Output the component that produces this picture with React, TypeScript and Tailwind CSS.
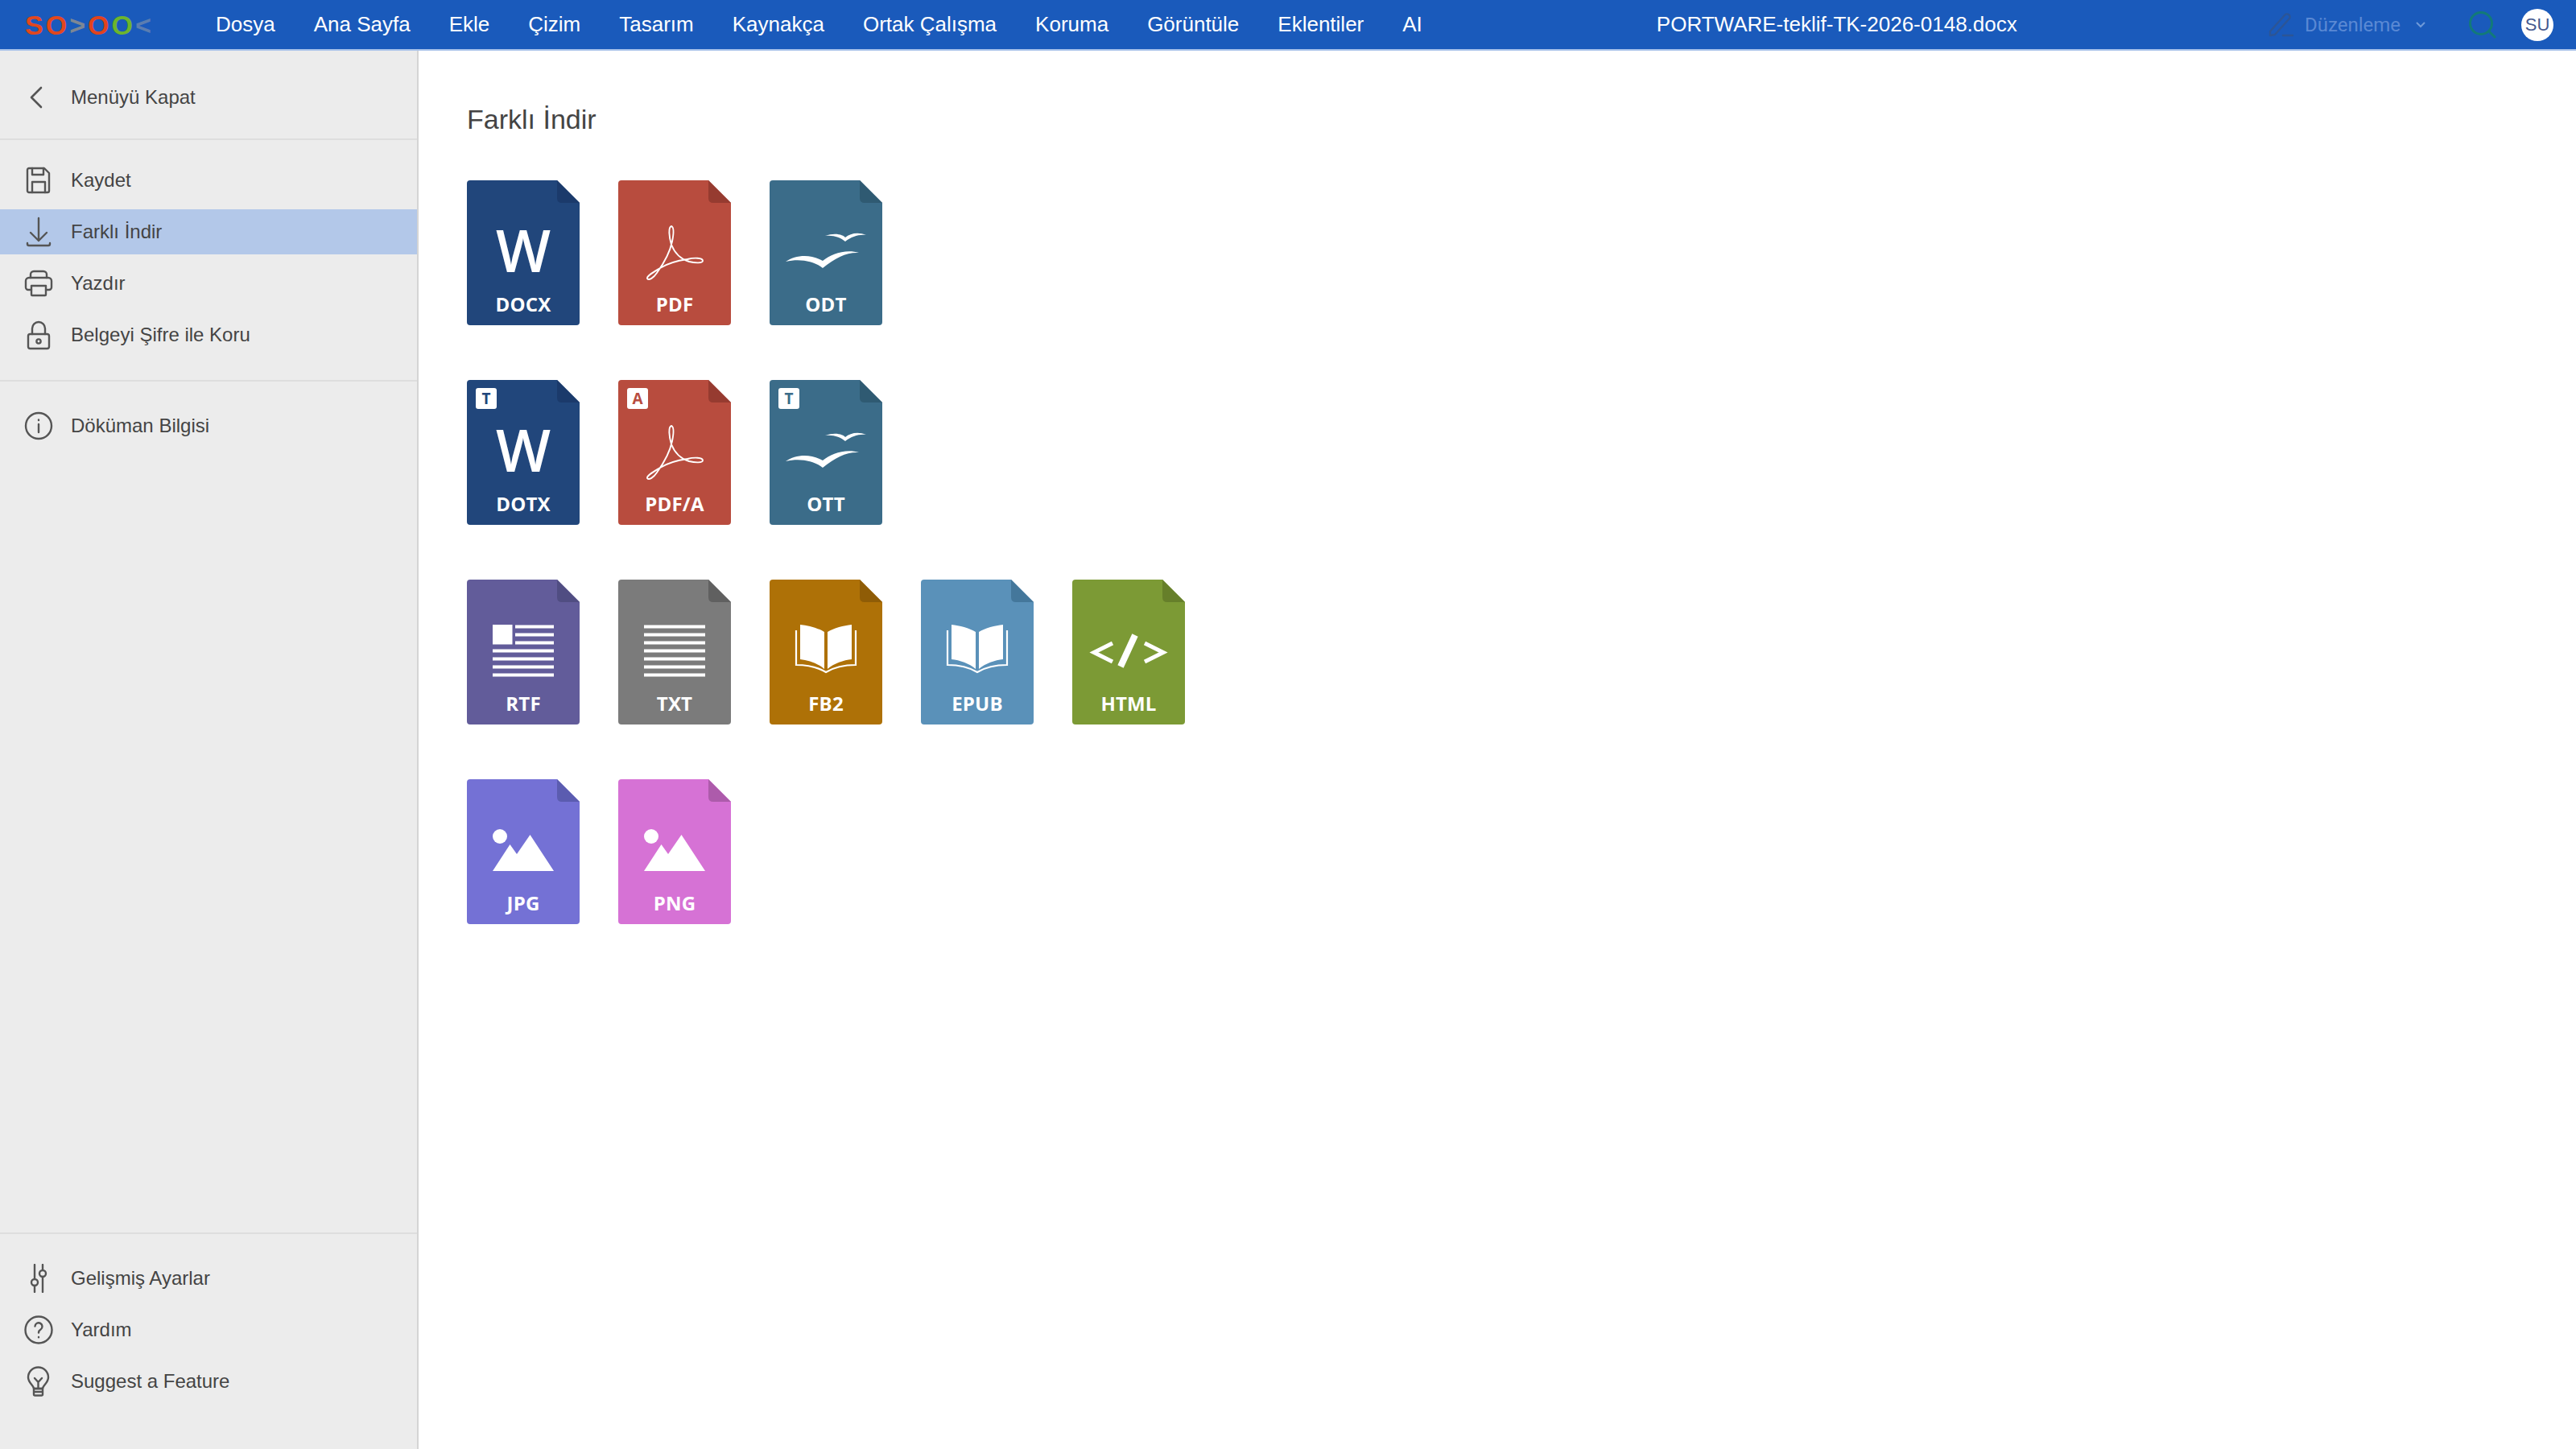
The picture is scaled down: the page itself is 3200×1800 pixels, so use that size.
import React from "react";

const stroke = { fill: "none", stroke: "#555555", strokeWidth: 2.4, strokeLinecap: "round" as const, strokeLinejoin: "round" as const };

const SaveI = () => (
  <svg width="36" height="36" viewBox="0 0 36 36" {...stroke}>
    <path d="M6 3h19l6 6v22a2 2 0 0 1-2 2H6a2 2 0 0 1-2-2V5a2 2 0 0 1 2-2z" />
    <path d="M10 3v8h14V3M10 33V20h16v13" />
  </svg>
);
const DownloadI = () => (
  <svg width="36" height="38" viewBox="0 0 36 38" {...stroke}>
    <path d="M18 2v28M8 20l10 10 10-10" />
    <path d="M4 33v1a2 2 0 0 0 2 2h24a2 2 0 0 0 2-2v-1" />
  </svg>
);
const PrintI = () => (
  <svg width="36" height="36" viewBox="0 0 36 36" {...stroke}>
    <path d="M8 11V7a4 4 0 0 1 4-4h12a4 4 0 0 1 4 4v4" />
    <path d="M9 26H5a3 3 0 0 1-3-3v-8a4 4 0 0 1 4-4h24a4 4 0 0 1 4 4v8a3 3 0 0 1-3 3h-4" />
    <path d="M9 21h18v11a1 1 0 0 1-1 1H10a1 1 0 0 1-1-1z" />
  </svg>
);
const LockI = () => (
  <svg width="36" height="38" viewBox="0 0 36 38" {...stroke}>
    <rect x="5" y="18" width="26" height="18" rx="2.5" />
    <path d="M10 18v-7a8 8 0 0 1 16 0v7" />
    <circle cx="18" cy="27" r="2.6" />
  </svg>
);
const InfoI = () => (
  <svg width="36" height="36" viewBox="0 0 36 36" {...stroke}>
    <circle cx="18" cy="18" r="16" />
    <path d="M18 16v10M18 10.5v.5" />
  </svg>
);
const SlidersI = () => (
  <svg width="36" height="36" viewBox="0 0 36 36" {...stroke}>
    <path d="M13 1v17M13 27v8M23 1v6M23 16v19" />
    <circle cx="13" cy="23" r="4" />
    <circle cx="23" cy="12" r="4" />
  </svg>
);
const HelpI = () => (
  <svg width="36" height="36" viewBox="0 0 36 36" {...stroke}>
    <circle cx="18" cy="18" r="16.5" />
    <path d="M13.5 13.5a4.5 4.5 0 1 1 7 4c-1.600 1-2.500 2-2.500 4M18 27v.2" />
  </svg>
);
const BulbI = () => (
  <svg width="36" height="38" viewBox="0 0 36 38" {...stroke}>
    <path d="M12 28c0-4-7-7-7-14a12.500 12.500 0 0 1 25 0c0 7-7 10-7 14z" />
    <path d="M13 15l4.500 5 4.500-5M17.500 20v8M12 28h11v7a1.500 1.500 0 0 1-1.500 1.500h-8A1.500 1.500 0 0 1 12 35zM12 32h11" />
  </svg>
);

function Item({ icon, label, active }: { icon: React.ReactNode; label: string; active?: boolean }) {
  return (
    <div className={`flex h-[56px] items-center ${active ? "bg-[#b3c8e9]" : ""}`}>
      <div className="flex w-[88px] shrink-0 items-center justify-start pl-[30px]">{icon}</div>
      <span className="text-[24px] leading-none text-[#444444]">{label}</span>
    </div>
  );
}

const Word = () => (
  <text x="70" y="114" textAnchor="middle" fill="#fff" fontSize="72" fontWeight="600" className="font-['Open_Sans',sans-serif]">W</text>
);
const Pdf = () => (
  <path
    d="M66 57C62 58 63 70 66 80C70 90 78 98 88 101C96 103 105 103 105 100C105 96 94 96 86 98C72 100 60 104 52 109C44 114 35 119 36 122C38 125 44 121 48 115C56 104 64 90 67 76C69 66 69 58 66 57Z"
    fill="none"
    stroke="#fff"
    strokeWidth="1.900"
  />
);
const Gulls = () => (
  <g fill="#fff">
    <path d="M20 101C32 93 50 91 66 100C76 92 94 85 111 90C96 89 82 96 66 109C58 102 40 96 20 101Z" />
    <path d="M69 69C82 64 92 68 94 71C100 66 110 64 120 68C110 67 102 70 94 76C88 71 80 68 69 69Z" />
  </g>
);
const Rtf = () => (
  <g fill="#fff">
    <rect x="32" y="56" width="24.500" height="24.500" />
    {[56.500, 66.500, 76.500].map((y) => (
      <rect key={y} x="60" y={y} width="48" height="4" />
    ))}
    {[86.500, 96.500, 106.500, 116.500].map((y) => (
      <rect key={y} x="32" y={y} width="76" height="4" />
    ))}
  </g>
);
const Txt = () => (
  <g fill="#fff">
    {[56.500, 66.500, 76.500, 86.500, 96.500, 106.500, 116.500].map((y) => (
      <rect key={y} x="32" y={y} width="76" height="4" />
    ))}
  </g>
);
const Book = () => (
  <g>
    <path fill="#fff" d="M38 56C48 57 60 60 68 65V111C60 104 48 100 38 99Z" />
    <path fill="#fff" d="M72 65C80 60 92 57 102 56V99C92 100 80 104 72 111Z" />
    <path fill="none" stroke="#fff" strokeWidth="2.200" d="M33 63V106C48 106 60 109 70 115C80 109 92 106 107 106V63" />
  </g>
);
const Code = () => (
  <g fill="none" stroke="#fff">
    <path strokeWidth="5" d="M50 79L27 90.500L50 102" />
    <path strokeWidth="5" d="M90 79L113 90.500L90 102" />
    <path strokeWidth="8" d="M78 69L60 108" />
  </g>
);
const Pic = () => (
  <g fill="#fff">
    <circle cx="41" cy="71" r="9" />
    <path d="M32 114L53.500 81L62 93L78.500 69L108 114Z" />
  </g>
);

type Card = { label: string; bg: string; fold: string; art: React.ReactNode; badge?: string };

const rows: Card[][] = [
  [
    { label: "DOCX", bg: "#21467b", fold: "#1b3a6b", art: <Word /> },
    { label: "PDF", bg: "#b84c3e", fold: "#963b30", art: <Pdf /> },
    { label: "ODT", bg: "#3b6c89", fold: "#2f5a72", art: <Gulls /> },
  ],
  [
    { label: "DOTX", bg: "#21467b", fold: "#1b3a6b", art: <Word />, badge: "T" },
    { label: "PDF/A", bg: "#b84c3e", fold: "#963b30", art: <Pdf />, badge: "A" },
    { label: "OTT", bg: "#3b6c89", fold: "#2f5a72", art: <Gulls />, badge: "T" },
  ],
  [
    { label: "RTF", bg: "#625c9a", fold: "#504d82", art: <Rtf /> },
    { label: "TXT", bg: "#7b7b7b", fold: "#606060", art: <Txt /> },
    { label: "FB2", bg: "#ae7107", fold: "#8f5c06", art: <Book /> },
    { label: "EPUB", bg: "#5a91b9", fold: "#44779b", art: <Book /> },
    { label: "HTML", bg: "#7c9a35", fold: "#667f2a", art: <Code /> },
  ],
  [
    { label: "JPG", bg: "#7471d5", fold: "#5b5cb0", art: <Pic /> },
    { label: "PNG", bg: "#d672d5", fold: "#ad5bab", art: <Pic /> },
  ],
];

function FileCard({ c }: { c: Card }) {
  return (
    <div className="relative h-[180px] w-[140px]">
      <svg width="140" height="180" viewBox="0 0 140 180" className="block">
        <path d="M4 0H112L140 28V176a4 4 0 0 1-4 4H4a4 4 0 0 1-4-4V4a4 4 0 0 1 4-4Z" fill={c.bg} />
        <path d="M112 0L140 28H118Q112 28 112 22Z" fill={c.fold} />
        {c.art}
      </svg>
      {c.badge && (
        <span
          className="absolute left-[11px] top-[10px] flex h-[26px] w-[26px] items-center justify-center rounded-[3px] bg-white font-['Open_Sans',sans-serif] text-[19px] font-bold leading-none"
          style={{ color: c.bg }}
        >
          {c.badge}
        </span>
      )}
      <span className="absolute inset-x-0 bottom-[10px] text-center font-['Open_Sans',sans-serif] text-[24px] font-bold leading-[32px] tracking-[0.2px] text-white">
        {c.label}
      </span>
    </div>
  );
}

const menu = ["Dosya", "Ana Sayfa", "Ekle", "Çizim", "Tasarım", "Kaynakça", "Ortak Çalışma", "Koruma", "Görüntüle", "Eklentiler", "AI"];

export default function App() {
  return (
    <div className="flex h-[1800px] w-[3200px] flex-col overflow-hidden bg-white font-['Liberation_Sans',Arial,sans-serif]">
      <header className="flex h-[63px] shrink-0 items-center border-b-2 border-[#a9c3ea] bg-[#1a5abb] text-[26px] text-white">
        <div className="flex w-[268px] shrink-0 items-center pl-[31px] text-[34px] font-bold leading-none tracking-[3px]">
          <span className="text-[#e2471d]">SO</span>
          <span className="text-[#7d8794]">&gt;</span>
          <span className="text-[#e2431c]">O</span>
          <span className="text-[#6cb52d]">O</span>
          <span className="text-[#5b7db0]">&lt;</span>
        </div>
        <nav className="flex gap-[48px] whitespace-nowrap">
          {menu.map((m) => (
            <span key={m}>{m}</span>
          ))}
        </nav>
        <div className="ml-[291px] whitespace-nowrap">PORTWARE-teklif-TK-2026-0148.docx</div>
        <div className="ml-auto flex items-center pr-[28px]">
          <svg width="32" height="32" viewBox="0 0 32 32" fill="none" stroke="#2c5596" strokeWidth="2.400" strokeLinecap="round" strokeLinejoin="round">
            <path d="M2 24L20 4a3.500 3.500 0 0 1 6 4L8 28l-6 1z" />
            <path d="M18 29h12" />
          </svg>
          <span className="ml-[13px] font-['Roboto',sans-serif] text-[24px] text-[#5a89d4]">Düzenleme</span>
          <svg className="ml-[18px]" width="14" height="10" viewBox="0 0 14 10" fill="none" stroke="#6f9ad8" strokeWidth="2">
            <path d="M2 2l5 5 5-5" />
          </svg>
          <svg className="ml-[53px]" width="34" height="34" viewBox="0 0 34 34" fill="none" stroke="#127a78" strokeWidth="3" strokeLinecap="round">
            <circle cx="15" cy="15" r="13.500" />
            <path d="M25 25l7 7" />
          </svg>
          <span className="ml-[31px] flex h-[40px] w-[40px] items-center justify-center rounded-full bg-white text-[22px] text-[#46598f]">SU</span>
        </div>
      </header>
      <div className="flex min-h-0 flex-1">
        <aside className="flex w-[520px] shrink-0 flex-col border-r-2 border-[#d5d5d5] bg-[#ececec]">
          <div className="flex h-[109px] shrink-0 items-center pt-[6px]">
            <div className="flex w-[88px] shrink-0 pl-[36px]">
              <svg width="18" height="30" viewBox="0 0 18 30" fill="none" stroke="#555555" strokeWidth="2.600" strokeLinecap="round" strokeLinejoin="round">
                <path d="M15 3L3 15l12 12" />
              </svg>
            </div>
            <span className="text-[24px] leading-none text-[#444444]">Menüyü Kapat</span>
          </div>
          <div className="border-b-2 border-[#dedede]" />
          <div className="flex flex-col gap-[8px] pb-[28px] pt-[22px]">
            <Item icon={<SaveI />} label="Kaydet" />
            <Item icon={<DownloadI />} label="Farklı İndir" active />
            <Item icon={<PrintI />} label="Yazdır" />
            <Item icon={<LockI />} label="Belgeyi Şifre ile Koru" />
          </div>
          <div className="border-b-2 border-[#dedede]" />
          <div className="pt-[27px]">
            <Item icon={<InfoI />} label="Döküman Bilgisi" />
          </div>
          <div className="mt-auto border-b-2 border-[#dedede]" />
          <div className="flex flex-col gap-[8px] pb-[56px] pt-[27px]">
            <Item icon={<SlidersI />} label="Gelişmiş Ayarlar" />
            <Item icon={<HelpI />} label="Yardım" />
            <Item icon={<BulbI />} label="Suggest a Feature" />
          </div>
        </aside>
        <main className="flex-1 pl-[60px] pt-[61px]">
          <h1 className="text-[34px] font-normal leading-[48px] text-[#444444]">Farklı İndir</h1>
          <div className="mt-[52px] flex flex-col gap-[68px]">
            {rows.map((row, i) => (
              <div key={i} className="flex gap-[48px]">
                {row.map((c) => (
                  <FileCard key={c.label} c={c} />
                ))}
              </div>
            ))}
          </div>
        </main>
      </div>
    </div>
  );
}
